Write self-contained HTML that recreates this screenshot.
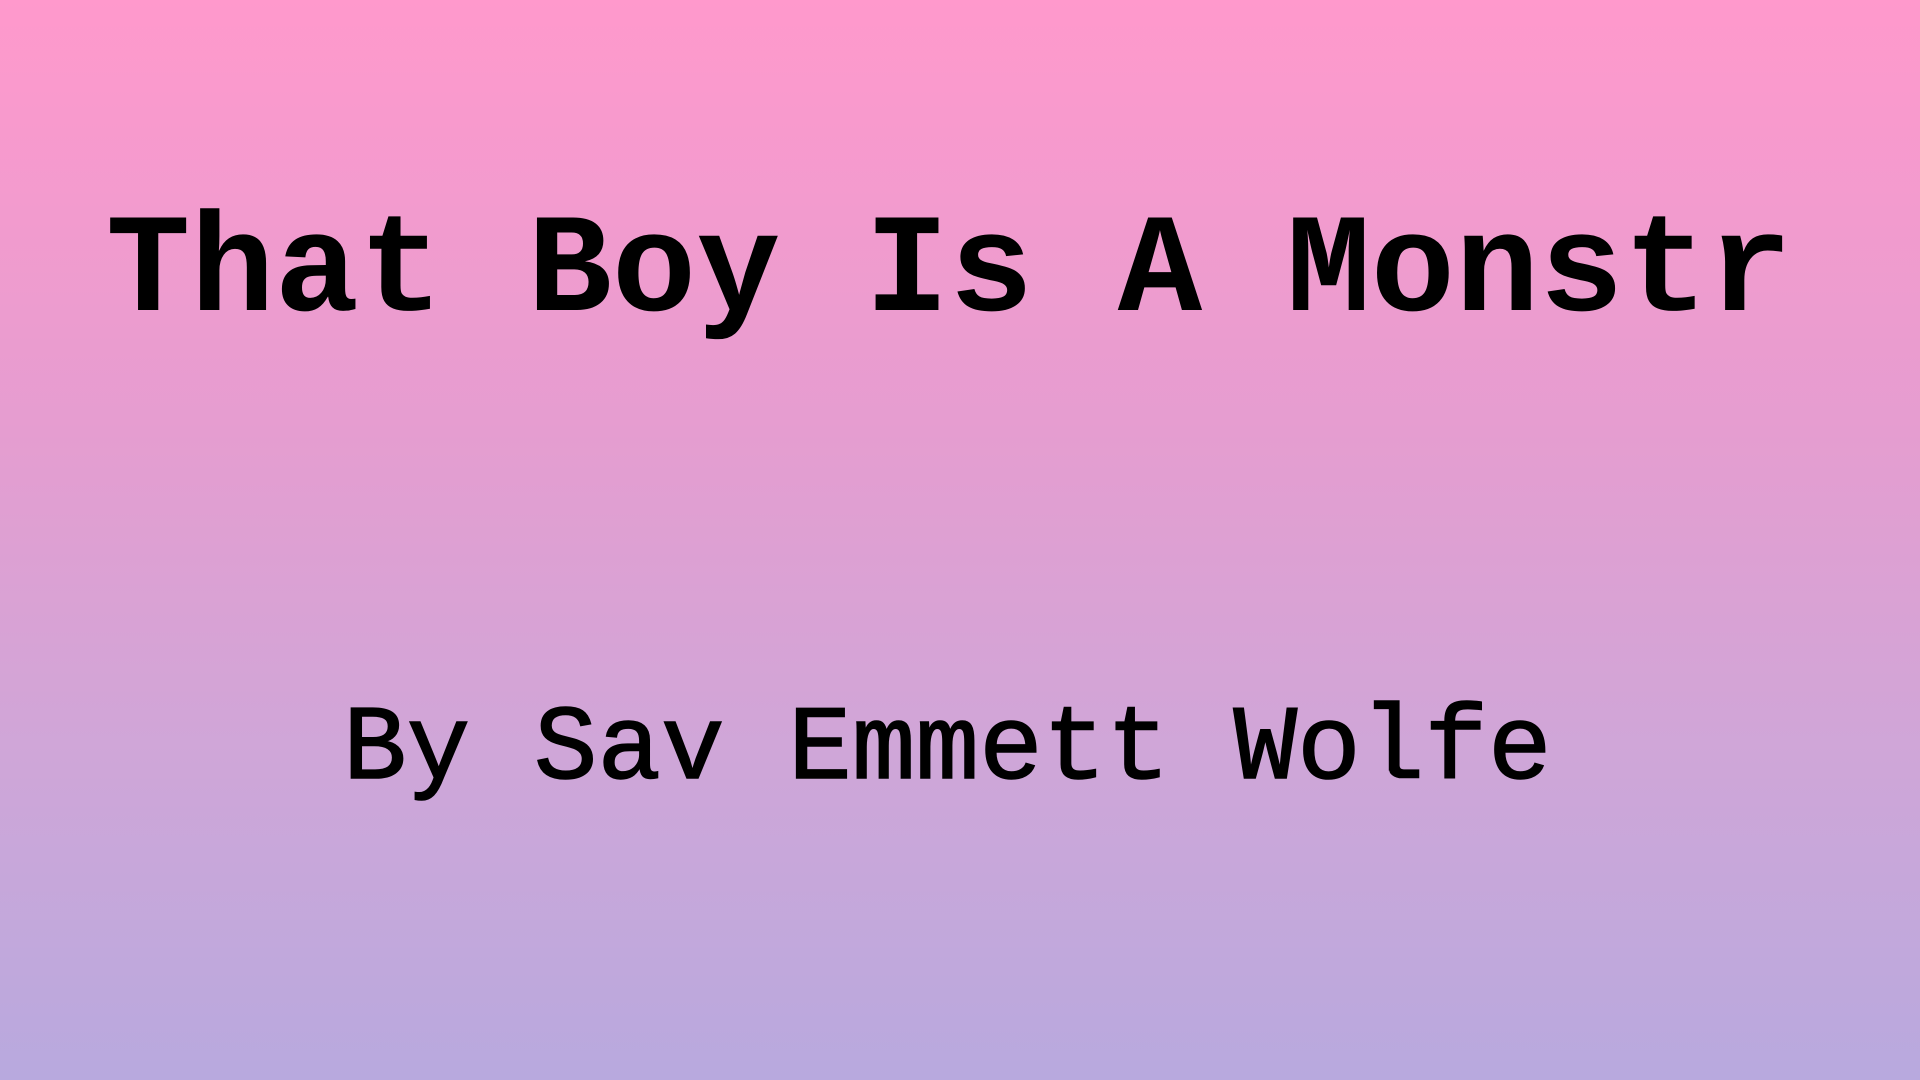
<!DOCTYPE html>
<html><head><style>
html,body{margin:0;padding:0;}
body{width:1920px;height:1080px;overflow:hidden;position:relative;background:linear-gradient(to bottom,#ff99cc 0%,#e59dd0 40%,#cfa6d8 70%,#b8a9de 100%);font-family:"Liberation Mono",monospace;color:#000;}
.t{position:absolute;white-space:pre;line-height:1;}
#a{left:106px;top:204px;font-size:140.5px;font-weight:bold;}
#b{left:343px;top:697px;font-size:106px;font-weight:normal;-webkit-text-stroke:1.5px #000;}
</style></head><body>
<div class="t" id="a">That Boy Is A Monstr</div>
<div class="t" id="b">By Sav Emmett Wolfe</div>
</body></html>
